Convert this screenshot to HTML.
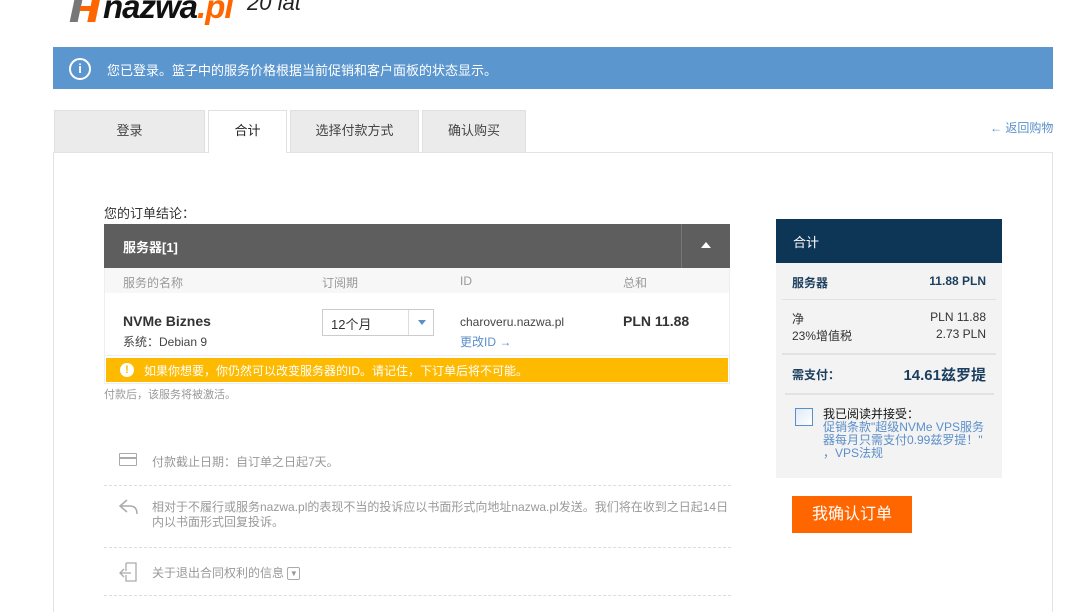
<!DOCTYPE html>
<html><head><meta charset="utf-8"><style>
*{margin:0;padding:0;box-sizing:border-box}
body{width:1069px;height:604px;overflow:hidden;background:#fff;font-family:"Liberation Sans","Noto Sans CJK SC",sans-serif;font-size:12px;color:#333;position:relative}
.a{position:absolute}
.tab{position:absolute;top:110px;height:42px;background:#ebebeb;border:1px solid #e0e0e0;border-bottom:none;text-align:center;line-height:40px;font-size:13px;color:#444}
.dash{position:absolute;left:104px;width:627px;border-top:1px dashed #ddd}
.g{color:#999}
</style></head><body>
<!-- logo -->
<div class="a" style="left:72px;top:-6px;width:30px;height:30px">
<div class="a" style="left:0;top:6px;width:8px;height:22px;background:#777;transform:skewX(-12deg)"></div>
<div class="a" style="left:8px;top:12px;width:14px;height:5px;background:#f60;transform:skewX(-12deg)"></div>
<div class="a" style="left:18px;top:2px;width:8px;height:26px;background:#f60;transform:skewX(-12deg)"></div>
</div>
<div class="a" style="left:103px;top:-12px;font-size:33px;font-weight:bold;font-style:italic;color:#111;letter-spacing:-1px">nazwa<span style="color:#f60">.pl</span></div>
<div class="a" style="left:247px;top:-10px;font-size:22px;font-style:italic;color:#222">20 lat</div>
<!-- info bar -->
<div class="a" style="left:53px;top:47px;width:1000px;height:42px;background:#5b96cf"></div>
<div class="a" style="left:69px;top:58px;width:22px;height:22px;border:2px solid #fff;border-radius:50%;color:#fff;text-align:center;font-size:13px;line-height:18px;font-weight:bold">i</div>
<div class="a" style="left:107px;top:60px;color:#fff;font-size:13px">您已登录。篮子中的服务价格根据当前促销和客户面板的状态显示。</div>
<!-- tabs -->
<div class="tab" style="left:54px;width:151px">登录</div>
<div class="tab" style="left:208px;width:79px;background:#fff;height:43px;color:#222">合计</div>
<div class="tab" style="left:290px;width:129px">选择付款方式</div>
<div class="tab" style="left:422px;width:104px">确认购买</div>
<div class="a" style="left:990px;top:119px;color:#5b8fc9;font-size:12px">← 返回购物</div>
<!-- panel -->
<div class="a" style="left:53px;top:152px;width:1000px;height:460px;border:1px solid #e3e3e3;border-bottom:none"></div>
<div class="a" style="left:209px;top:151px;width:77px;height:3px;background:#fff"></div>
<div class="a" style="left:104px;top:203px;font-size:13px;color:#333">您的订单结论：</div>
<!-- order table -->
<div class="a" style="left:104px;top:224px;width:626px;height:44px;background:#5e5e5e"></div>
<div class="a" style="left:123px;top:237px;color:#fff;font-weight:bold;font-size:13px">服务器[1]</div>
<div class="a" style="left:681px;top:224px;width:1px;height:44px;background:#777"></div>
<div class="a" style="left:701px;top:242px;width:0;height:0;border-left:5px solid transparent;border-right:5px solid transparent;border-bottom:6px solid #fff"></div>
<div class="a" style="left:104px;top:268px;width:626px;height:116px;border:1px solid #eee;border-top:none"></div>
<div class="a" style="left:105px;top:268px;width:624px;height:25px;background:#f7f7f7"></div>
<div class="a g" style="left:123px;top:274px">服务的名称</div>
<div class="a g" style="left:322px;top:274px">订阅期</div>
<div class="a g" style="left:460px;top:274px">ID</div>
<div class="a g" style="left:623px;top:274px">总和</div>
<div class="a" style="left:123px;top:313px;font-weight:bold;font-size:14px;color:#333">NVMe Biznes</div>
<div class="a" style="left:123px;top:333px;color:#444">系统：Debian 9</div>
<div class="a" style="left:322px;top:309px;width:112px;height:27px;border:1px solid #ccc;background:#fff"></div>
<div class="a" style="left:331px;top:314px;font-size:13px">12个月</div>
<div class="a" style="left:408px;top:310px;width:1px;height:25px;background:#ddd"></div>
<div class="a" style="left:418px;top:320px;border-left:4px solid transparent;border-right:4px solid transparent;border-top:5px solid #5b8fc9"></div>
<div class="a" style="left:460px;top:315px;color:#444">charoveru.nazwa.pl</div>
<div class="a" style="left:460px;top:333px;color:#5b8fc9">更改ID →</div>
<div class="a" style="left:623px;top:313px;font-weight:bold;font-size:14px">PLN 11.88</div>
<div class="a" style="left:105px;top:355px;width:624px;height:1px;background:#eee"></div>
<div class="a" style="left:106px;top:358px;width:622px;height:24px;background:#fdba00"></div>
<div class="a" style="left:120px;top:363px;width:14px;height:14px;border-radius:50%;background:#fff;color:#fdba00;font-weight:bold;font-size:11px;text-align:center;line-height:14px">!</div>
<div class="a" style="left:144px;top:362px;color:#fff;font-size:12px">如果你想要，你仍然可以改变服务器的ID。请记住，下订单后将不可能。</div>
<div class="a g" style="left:104px;top:386px;font-size:11px">付款后，该服务将被激活。</div>
<!-- info list -->
<div class="a" style="left:119px;top:453px;width:18px;height:13px;border:1.5px solid #aaa;border-radius:1px"></div>
<div class="a" style="left:119px;top:457px;width:18px;height:1.5px;background:#aaa"></div>
<div class="a g" style="left:152px;top:453px">付款截止日期：自订单之日起7天。</div>
<div class="dash" style="top:485px"></div>
<svg class="a" style="left:118px;top:498px" width="22" height="18"><path d="M9 2 L2 8 L9 14 M2 8 H12 Q19 8 19 16" fill="none" stroke="#aaa" stroke-width="1.5"/></svg>
<div class="a g" style="left:152px;top:500px;width:580px;line-height:15px">相对于不履行或服务nazwa.pl的表现不当的投诉应以书面形式向地址nazwa.pl发送。我们将在收到之日起14日内以书面形式回复投诉。</div>
<div class="dash" style="top:547px"></div>
<svg class="a" style="left:118px;top:561px" width="22" height="22"><path d="M8 2 H18 V20 H8 V14 M8 10 V2 M2 12 H13 M6 8 L2 12 L6 16" fill="none" stroke="#aaa" stroke-width="1.3"/></svg>
<div class="a g" style="left:152px;top:564px">关于退出合同权利的信息 <span style="display:inline-block;width:13px;height:13px;border:1px solid #aaa;border-radius:2px;font-size:8px;text-align:center;line-height:11px;vertical-align:middle">▼</span></div>
<div class="dash" style="top:595px"></div>
<!-- summary -->
<div class="a" style="left:776px;top:219px;width:226px;height:44px;background:#0d3556"></div>
<div class="a" style="left:793px;top:232px;color:#fff;font-size:13px">合计</div>
<div class="a" style="left:776px;top:263px;width:226px;height:215px;background:#f3f3f3"></div>
<div class="a" style="left:792px;top:274px;font-weight:bold;color:#1c3f5f">服务器</div>
<div class="a" style="left:900px;top:274px;width:86px;text-align:right;font-weight:bold;color:#1c3f5f">11.88 PLN</div>
<div class="a" style="left:782px;top:299px;width:214px;height:1px;background:#e2e2e2"></div>
<div class="a" style="left:792px;top:310px;color:#333">净</div>
<div class="a" style="left:900px;top:310px;width:86px;text-align:right">PLN 11.88</div>
<div class="a" style="left:792px;top:327px;color:#333">23%增值税</div>
<div class="a" style="left:900px;top:327px;width:86px;text-align:right">2.73 PLN</div>
<div class="a" style="left:782px;top:353px;width:214px;height:2px;background:#e2e2e2"></div>
<div class="a" style="left:792px;top:366px;font-weight:bold;color:#1c3f5f">需支付：</div>
<div class="a" style="left:880px;top:364px;width:106px;text-align:right;font-weight:bold;font-size:15px;color:#1c3f5f">14.61兹罗提</div>
<div class="a" style="left:785px;top:393px;width:209px;height:2px;background:#e2e2e2"></div>
<div class="a" style="left:795px;top:408px;width:18px;height:18px;border:1px solid #5b8fc9;background:linear-gradient(135deg,#dfe9f7,#fff)"></div>
<div class="a" style="left:823px;top:408px;color:#111;line-height:13px">我已阅读并接受：</div>
<div class="a" style="left:823px;top:421px;width:170px;color:#5b8fc9;line-height:13px">促销条款"超级NVMe VPS服务<br>器每月只需支付0.99兹罗提！"<br>，VPS法规</div>
<div class="a" style="left:792px;top:496px;width:120px;height:37px;background:#ff6600;color:#fff;font-size:16px;text-align:center;line-height:37px">我确认订单</div>
</body></html>
